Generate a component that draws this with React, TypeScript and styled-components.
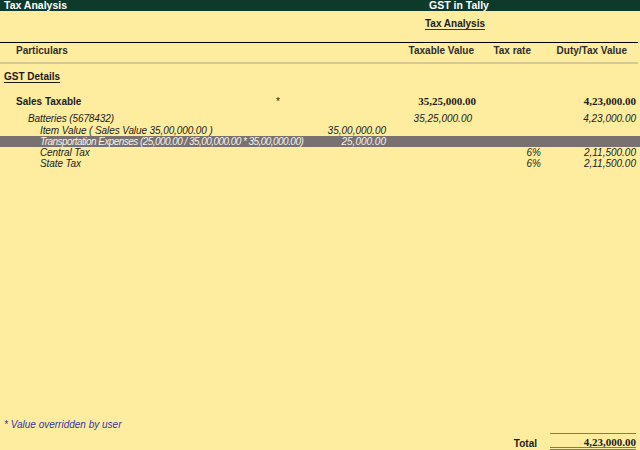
import styled, { createGlobalStyle } from "styled-components";

const GlobalStyle = createGlobalStyle`
    html, body {
        margin: 0;
        padding: 0;
        background: #feec9f;
    }
`

const Screen = styled.div`
    width: 640px;
    height: 450px;
    display: flex;
    flex-direction: column;
    background: #feec9f;
    font-family: "Liberation Sans", Arial, sans-serif;
    font-size: 10px;
    color: #1c1c1c;
    overflow: hidden;
`

const TitleBar = styled.div`
    height: 11px;
    display: grid;
    grid-template-columns: 1fr 1fr;
    background: #0e3a2b;
    color: #ffffff;
    font-weight: bold;
    font-size: 10.5px;
    line-height: 11px;
    padding-left: 4px;
`

const Company = styled.span`
    padding-left: 107px;
`

const ReportHead = styled.div`
    height: 31px;
    display: flex;
    justify-content: flex-end;
    padding-right: 155px;
    padding-top: 7px;
    box-sizing: border-box;
`

const ReportName = styled.span`
    font-weight: bold;
    line-height: 12px;
    height: 11px;
    border-bottom: 1px solid #333;
`

const HeaderRow = styled.div`
    display: grid;
    grid-template-columns: minmax(0, 1fr) 90px 65px 95px;
    padding-right: 4px;
    height: 22px;
    border-top: 1px solid #000;
    border-bottom: 2px solid #d6c893;
    font-weight: bold;
    color: #2e2e2e;
    line-height: 11px;
    padding-top: 2px;
    box-sizing: border-box;
    margin-right: 2px;
`

const HeadCell = styled.div<{ $pad?: number; $left?: number }>`
    text-align: ${(p) => (p.$left !== undefined ? "left" : "right")};
    padding-left: ${(p) => p.$left ?? 0}px;
    padding-right: ${(p) => p.$pad ?? 0}px;
`

const Body = styled.div`
    flex: 1;
    display: flex;
    flex-direction: column;
    padding-top: 7px;
`

const Section = styled.div`
    padding-left: 4px;
    font-weight: bold;
    line-height: 12px;
    margin-bottom: 13px;
`

const Underlined = styled.span`
    border-bottom: 1px solid #1c1c1c;
`

const Row = styled.div<{ $level: number; $bold?: boolean; $italic?: boolean; $selected?: boolean; $gap?: number }>`
    display: grid;
    grid-template-columns: minmax(0, 1fr) 86px 90px 65px 95px;
    padding-right: 4px;
    height: 11px;
    line-height: 11px;
    margin-bottom: ${(p) => p.$gap ?? 0}px;
    font-weight: ${(p) => (p.$bold ? "bold" : "normal")};
    font-style: ${(p) => (p.$italic ? "italic" : "normal")};
    background: ${(p) => (p.$selected ? "#787170" : "transparent")};
    color: ${(p) => (p.$selected ? "#f4f1ee" : "#1c1c1c")};
    white-space: nowrap;

    & > :first-child {
        padding-left: ${(p) => 4 + p.$level * 12}px;
        letter-spacing: ${(p) => (p.$selected ? "-0.55px" : p.$italic ? "-0.1px" : "0")};
    }
`

const Name = styled.div`
    position: relative;
    overflow: visible;
`

const Star = styled.span`
    position: absolute;
    left: 276px;
    top: 0;
    font-weight: normal;
`

const Amount = styled.div<{ $serif?: boolean; $shift?: number }>`
    text-align: right;
    font-family: ${(p) => (p.$serif ? '"Liberation Serif", "Times New Roman", serif' : "inherit")};
    font-size: ${(p) => (p.$serif ? "11px" : "10px")};
    padding-right: ${(p) => p.$shift ?? 0}px;
`

const Note = styled.div`
    padding-left: 4px;
    color: #3a33a8;
    font-style: italic;
    line-height: 12px;
    margin-bottom: 2px;
`

const TotalRow = styled.div`
    display: flex;
    justify-content: flex-end;
    align-items: flex-end;
    gap: 13px;
    padding-right: 4px;
    height: 17px;
`

const TotalLabel = styled.span`
    font-weight: bold;
    line-height: 12px;
`

const TotalBox = styled.div`
    width: 86px;
    height: 17px;
    box-sizing: border-box;
    border-top: 1px solid #7a7a7a;
    border-bottom: 3px double #7a7a7a;
    text-align: right;
    font-family: "Liberation Serif", "Times New Roman", serif;
    font-weight: bold;
    font-size: 11px;
    line-height: 16px;
    overflow: visible;
`

export default function App() {
    return (
        <Screen>
            <GlobalStyle />
            <TitleBar>
                <span>Tax Analysis</span>
                <Company>GST in Tally</Company>
            </TitleBar>
            <ReportHead>
                <ReportName>Tax Analysis</ReportName>
            </ReportHead>
            <HeaderRow>
                <HeadCell $left={16}>Particulars</HeadCell>
                <HeadCell $pad={0}>Taxable Value</HeadCell>
                <HeadCell $pad={8}>Tax rate</HeadCell>
                <HeadCell $pad={7}>Duty/Tax Value</HeadCell>
            </HeaderRow>
            <Body>
                <Section>
                    <Underlined>GST Details</Underlined>
                </Section>
                <Row $level={1} $bold $gap={6}>
                    <Name>
                        Sales Taxable
                        <Star>*</Star>
                    </Name>
                    <div />
                    <Amount $serif>35,25,000.00</Amount>
                    <div />
                    <Amount $serif>4,23,000.00</Amount>
                </Row>
                <Row $level={2} $italic $gap={1}>
                    <Name>Batteries (5678432)</Name>
                    <div />
                    <Amount $shift={4}>35,25,000.00</Amount>
                    <div />
                    <Amount>4,23,000.00</Amount>
                </Row>
                <Row $level={3} $italic>
                    <Name>Item Value ( Sales Value 35,00,000.00 )</Name>
                    <Amount>35,00,000.00</Amount>
                    <div />
                    <div />
                    <div />
                </Row>
                <Row $level={3} $italic $selected>
                    <Name>Transportation Expenses (25,000.00 / 35,00,000.00 * 35,00,000.00)</Name>
                    <Amount>25,000.00</Amount>
                    <div />
                    <div />
                    <div />
                </Row>
                <Row $level={3} $italic>
                    <Name>Central Tax</Name>
                    <div />
                    <div />
                    <Amount>6%</Amount>
                    <Amount>2,11,500.00</Amount>
                </Row>
                <Row $level={3} $italic>
                    <Name>State Tax</Name>
                    <div />
                    <div />
                    <Amount>6%</Amount>
                    <Amount>2,11,500.00</Amount>
                </Row>
            </Body>
            <Note>* Value overridden by user</Note>
            <TotalRow>
                <TotalLabel>Total</TotalLabel>
                <TotalBox>4,23,000.00</TotalBox>
            </TotalRow>
        </Screen>
    )
}
